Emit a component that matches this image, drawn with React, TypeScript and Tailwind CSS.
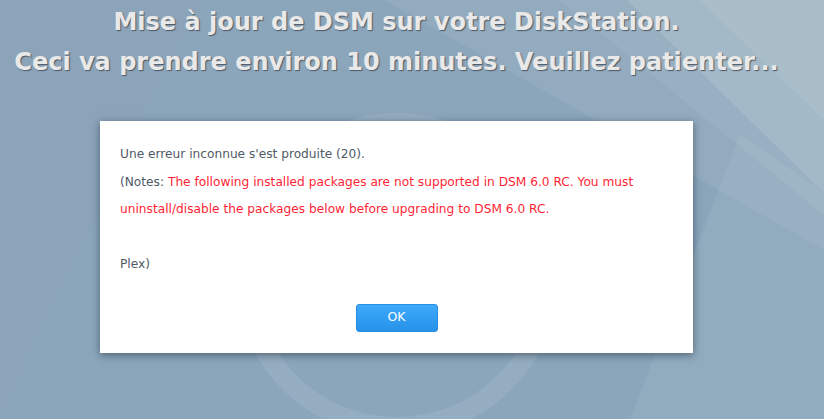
export default function App() {
  return (
    <div className="relative w-[824px] h-[419px] overflow-hidden bg-[#8ba5bb]">
      {/* background facets and ring */}
      <svg className="absolute inset-0" width="824" height="419" viewBox="0 0 824 419">
        <polygon points="384,0 824,0 824,250" fill="#d6e6e2" fillOpacity="0.10" />
        <polygon points="560,0 824,0 824,215" fill="#d6e6e2" fillOpacity="0.10" />
        <polygon points="627,0 824,0 824,193" fill="#e2eeea" fillOpacity="0.14" />
        <polygon points="700,0 824,0 824,120" fill="#e8f0ee" fillOpacity="0.10" />
        <polygon points="740,135 824,192 824,419 630,419" fill="#cfe2e0" fillOpacity="0.10" />
        <polygon points="0,0 200,0 0,419" fill="#8aa3b9" fillOpacity="0.3" />
        <circle cx="397" cy="275" r="152" fill="none" stroke="#ffffff" strokeOpacity="0.09" strokeWidth="20" />
      </svg>

      <div className="relative w-[793px] pt-[2px]">
        <div
          className="text-center text-[24px] leading-[40px] font-bold text-[#e9e9e9] [text-shadow:1px_1px_1px_#4f5864]"
          style={{ fontFamily: '"DejaVu Sans", Verdana, sans-serif' }}
        >
          <div>Mise à jour de DSM sur votre DiskStation.</div>
          <div>Ceci va prendre environ 10 minutes. Veuillez patienter...</div>
        </div>

        <div
          className="mx-auto mt-[39px] w-[593px] bg-white pt-[20px] pb-[21px] px-5 shadow-[0_2px_8px_rgba(30,40,55,0.55)]"
          style={{ fontFamily: '"DejaVu Sans", Verdana, sans-serif' }}
        >
          <div className="text-[12.2px] leading-[27.5px] text-[#4f5a66]">
            <p>Une erreur inconnue s'est produite (20).</p>
            <p>
              (Notes: <span className="text-[#ff1f35]">The following installed packages are not supported in DSM 6.0 RC. You must</span>
            </p>
            <p className="text-[#ff1f35]">uninstall/disable the packages below before upgrading to DSM 6.0 RC.</p>
            <div className="h-[27.5px]" />
            <p>Plex)</p>
          </div>
          <div className="mt-[25px] flex justify-center">
            <button className="w-[82px] h-[28px] rounded-[3px] border border-[#2a8ee0] bg-gradient-to-b from-[#3eaafa] to-[#2592ea] text-[12.5px] text-white">
              OK
            </button>
          </div>
        </div>
      </div>
    </div>
  );
}
